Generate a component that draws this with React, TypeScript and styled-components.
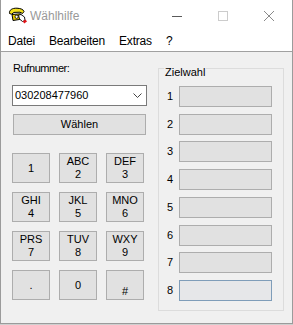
import { Fragment } from "react";
import styled, { createGlobalStyle } from "styled-components";

const GlobalStyle = createGlobalStyle`
  html, body {
    margin: 0;
    padding: 0;
    background: #cfcfcf;
  }
  body {
    font-family: "Liberation Sans", Arial, sans-serif;
    font-size: 11px;
    color: #000;
  }
`;

const Window = styled.div`
  box-sizing: border-box;
  width: 293px;
  height: 324px;
  border: 1px solid #9b9b9b;
  border-top: 0;
  background: #f0f0f0;
  display: flex;
  flex-direction: column;
`;

const TitleBar = styled.div`
  height: 31px;
  background: #fff;
  display: flex;
  align-items: center;
  flex-shrink: 0;
`;

const AppIcon = styled.svg`
  margin-left: 7px;
  width: 20px;
  height: 17px;
  flex-shrink: 0;
`;

const Title = styled.span`
  margin-left: 2px;
  font-size: 12px;
  color: #999;
  flex: 1;
`;

const CaptionButton = styled.div`
  width: 46px;
  height: 31px;
  display: flex;
  align-items: center;
  justify-content: center;
`;

const MenuBar = styled.div`
  height: 20px;
  background: #fff;
  display: flex;
  align-items: center;
  border-bottom: 1px solid #a0a0a0;
  flex-shrink: 0;
`;

const MenuItem = styled.span`
  font-size: 12px;
  padding: 0 7px;
  letter-spacing: -0.2px;
  color: #000;
`;

const Client = styled.div`
  flex: 1;
  display: flex;
  flex-direction: row;
  align-items: flex-start;
`;

const LeftPane = styled.div`
  width: 136px;
  margin: 10px 0 0 11px;
  display: flex;
  flex-direction: column;
`;

const Label = styled.div`
  line-height: 13px;
  height: 13px;
  margin-left: 1px;
  letter-spacing: -0.4px;
`;

const Combo = styled.div`
  box-sizing: border-box;
  margin-top: 10px;
  width: 135px;
  height: 21px;
  background: #fff;
  border: 1px solid #7a7a7a;
  display: flex;
  align-items: center;
  padding: 0 4px 0 2px;
`;

const ComboText = styled.span`
  flex: 1;
  line-height: 13px;
`;

const Button = styled.div`
  box-sizing: border-box;
  background: #e1e1e1;
  border: 1px solid #adadad;
  display: flex;
  flex-direction: column;
  align-items: center;
  justify-content: center;
  line-height: 13px;
  text-align: center;
`;

const DialButton = styled(Button)`
  margin: 8px 0 0 1px;
  width: 133px;
  height: 21px;
`;

const Keypad = styled.div`
  margin-top: 18px;
  display: grid;
  grid-template-columns: repeat(3, 38px);
  grid-auto-rows: 30px;
  column-gap: 9px;
  row-gap: 9px;
`;

const Key = styled(Button)<{ $shift?: number }>`
  padding-top: ${(p) => (p.$shift ? `${p.$shift}px` : 0)};
`;

const GroupBox = styled.div`
  box-sizing: border-box;
  position: relative;
  margin: 16px 0 0 10px;
  width: 126px;
  height: 243px;
  border: 1px solid #dcdcdc;
  padding: 17px 10px 0 8px;
`;

const Legend = styled.span`
  position: absolute;
  top: -3px;
  left: 5px;
  padding: 0 1px;
  background: #f0f0f0;
  line-height: 13px;
`;

const SpeedList = styled.div`
  display: grid;
  grid-template-columns: 12px 93px;
  grid-auto-rows: 21px;
  row-gap: 6.72px;
  align-items: center;
`;

const SpeedNo = styled.span`
  line-height: 13px;
`;

const SpeedField = styled.div<{ $focused?: boolean }>`
  box-sizing: border-box;
  height: 21px;
  background: ${(p) => (p.$focused ? "#e6e7e9" : "#e1e1e1")};
  border: 1px solid ${(p) => (p.$focused ? "#7f9db9" : "#adadad")};
`;

const keys = [
  { top: "", main: "1" },
  { top: "ABC", main: "2" },
  { top: "DEF", main: "3" },
  { top: "GHI", main: "4" },
  { top: "JKL", main: "5" },
  { top: "MNO", main: "6" },
  { top: "PRS", main: "7" },
  { top: "TUV", main: "8" },
  { top: "WXY", main: "9" },
  { top: "", main: "." },
  { top: "", main: "0" },
  { top: "", main: "#", shift: 12 },
];

const App = () => {
  return (
    <>
      <GlobalStyle />
      <Window>
        <TitleBar>
          <AppIcon viewBox="0 0 20 17">
            <path
              d="M1.5 6.5 C1 3 4 1 9 1.2 C13 1.4 15.5 2.6 16 4.5 L14.5 6.5 L12 5.2 L6 5.4 L3.6 7.2 Z"
              fill="#f3e01c"
              stroke="#000"
              strokeWidth="1"
            />
            <path
              d="M4 7.5 L12.5 6.8 L14.5 12 L5 13.5 Z"
              fill="#e8c800"
              stroke="#000"
              strokeWidth="1"
            />
            <circle cx="8.6" cy="9.8" r="1.6" fill="#fff" stroke="#000" strokeWidth="0.8" />
            <path
              d="M10.5 8 L13 7.5 L16.5 10 L17 13.5 L14.5 14.5 L11.5 12 Z"
              fill="#fff"
              stroke="#000"
              strokeWidth="0.9"
            />
            <path d="M14.8 14.2 L17.6 12.4 L19 14.4 L16.2 16.4 Z" fill="#e0151b" />
          </AppIcon>
          <Title>Wählhilfe</Title>
          <CaptionButton>
            <svg width="10" height="10" viewBox="0 0 10 10">
              <path d="M0 5.5 H10" stroke="#5a5a5a" strokeWidth="1" />
            </svg>
          </CaptionButton>
          <CaptionButton>
            <svg width="10" height="10" viewBox="0 0 10 10">
              <rect x="0.5" y="0.5" width="9" height="9" fill="none" stroke="#cccccc" strokeWidth="1" />
            </svg>
          </CaptionButton>
          <CaptionButton>
            <svg width="10" height="10" viewBox="0 0 10 10">
              <path d="M0 0 L10 10 M10 0 L0 10" stroke="#8a8a8a" strokeWidth="1" />
            </svg>
          </CaptionButton>
        </TitleBar>
        <MenuBar>
          <MenuItem>Datei</MenuItem>
          <MenuItem>Bearbeiten</MenuItem>
          <MenuItem>Extras</MenuItem>
          <MenuItem>?</MenuItem>
        </MenuBar>
        <Client>
          <LeftPane>
            <Label>Rufnummer:</Label>
            <Combo>
              <ComboText>030208477960</ComboText>
              <svg width="9" height="5" viewBox="0 0 9 5">
                <path d="M0.5 0.5 L4.5 4.5 L8.5 0.5" fill="none" stroke="#444" strokeWidth="1" />
              </svg>
            </Combo>
            <DialButton>Wählen</DialButton>
            <Keypad>
              {keys.map((k, idx) => (
                <Key key={`key_${idx}`} $shift={k.shift}>
                  {k.top && <span>{k.top}</span>}
                  <span>{k.main}</span>
                </Key>
              ))}
            </Keypad>
          </LeftPane>
          <GroupBox>
            <Legend>Zielwahl</Legend>
            <SpeedList>
              {[1, 2, 3, 4, 5, 6, 7, 8].map((n) => (
                <Fragment key={`speed_${n}`}>
                  <SpeedNo>{n}</SpeedNo>
                  <SpeedField $focused={n === 8} />
                </Fragment>
              ))}
            </SpeedList>
          </GroupBox>
        </Client>
      </Window>
    </>
  );
};

export default App;
